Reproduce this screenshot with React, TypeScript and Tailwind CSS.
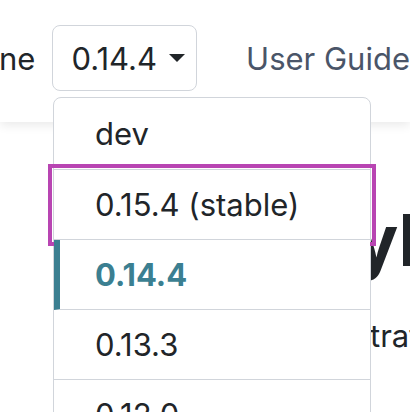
import React from "react";

const versions = [
  { id: "dev", label: "dev" },
  { id: "stable", label: "0.15.4 (stable)" },
  { id: "current", label: "0.14.4" },
  { id: "0.13.3", label: "0.13.3" },
  { id: "0.12.0", label: "0.12.0" },
];

const App = (): JSX.Element => {
  return (
    <div className="relative w-[410px] h-[412px] overflow-hidden bg-white font-['Inter','Liberation_Sans',sans-serif] text-[#212529]">
      {/* Top navbar */}
      <header className="relative z-10 h-[122px] bg-white shadow-[0_3px_10px_rgba(0,0,0,0.09)]">
        <div className="flex items-start pt-[25px]">
          <span className="h-[66px] flex items-center text-[31px] leading-none text-[#212529] -ml-[1px]">
            ne
          </span>
          <button className="ml-[17px] h-[66px] w-[147px] flex items-center gap-[12px] pl-[18px] border border-[#d1d5db] rounded-lg bg-white text-[31px] leading-none text-[#212529]">
            <span>0.14.4</span>
            <svg width="16" height="8" viewBox="0 0 16 8">
              <path d="M0 0 L16 0 L8 8 Z" fill="#212529" />
            </svg>
          </button>
          <a className="ml-[49px] h-[66px] flex items-center text-[31px] leading-none text-[#4a5568] whitespace-nowrap">
            User Guide
          </a>
        </div>
      </header>

      {/* Page content behind the menu */}
      <main className="whitespace-nowrap">
        <h1 className="mt-[82px] pl-[280px] text-[72px] font-bold leading-none text-[#212529]">
          Styling
        </h1>
        <p className="mt-[44px] pl-[312px] text-[31px] leading-none text-[#212529]">
          Illustrations
        </p>
      </main>

      {/* Version dropdown menu */}
      <div className="absolute z-20 left-[53px] top-[97px] w-[318px] h-[340px] bg-white border border-[#d1d5db] rounded-lg">
        {versions.map((v, i) => {
          if (v.id === "current") {
            return (
              <div
                key={v.id}
                className="relative z-10 h-[70px] flex items-center bg-white border-l-[6px] border-l-[#3b7f91] border-b border-b-[#d1d5db] pl-[35px] text-[31px] font-bold leading-none text-[#3b7f91]"
              >
                {v.label}
              </div>
            );
          }
          if (v.id === "stable") {
            return (
              <div
                key={v.id}
                className="relative h-[70px] flex items-center border-b border-b-[#d1d5db] pl-[41px] text-[31px] leading-none outline-4 outline-[#b845b2] outline-offset-2"
              >
                {v.label}
              </div>
            );
          }
          return (
            <div
              key={v.id}
              className={
                i === 0
                  ? "h-[72px] flex items-center border-b border-b-[#d1d5db] pl-[41px] text-[31px] leading-none"
                  : "h-[70px] flex items-center border-b border-b-[#d1d5db] pl-[41px] text-[31px] leading-none"
              }
            >
              {v.label}
            </div>
          );
        })}
      </div>
    </div>
  );
};

export default App;
